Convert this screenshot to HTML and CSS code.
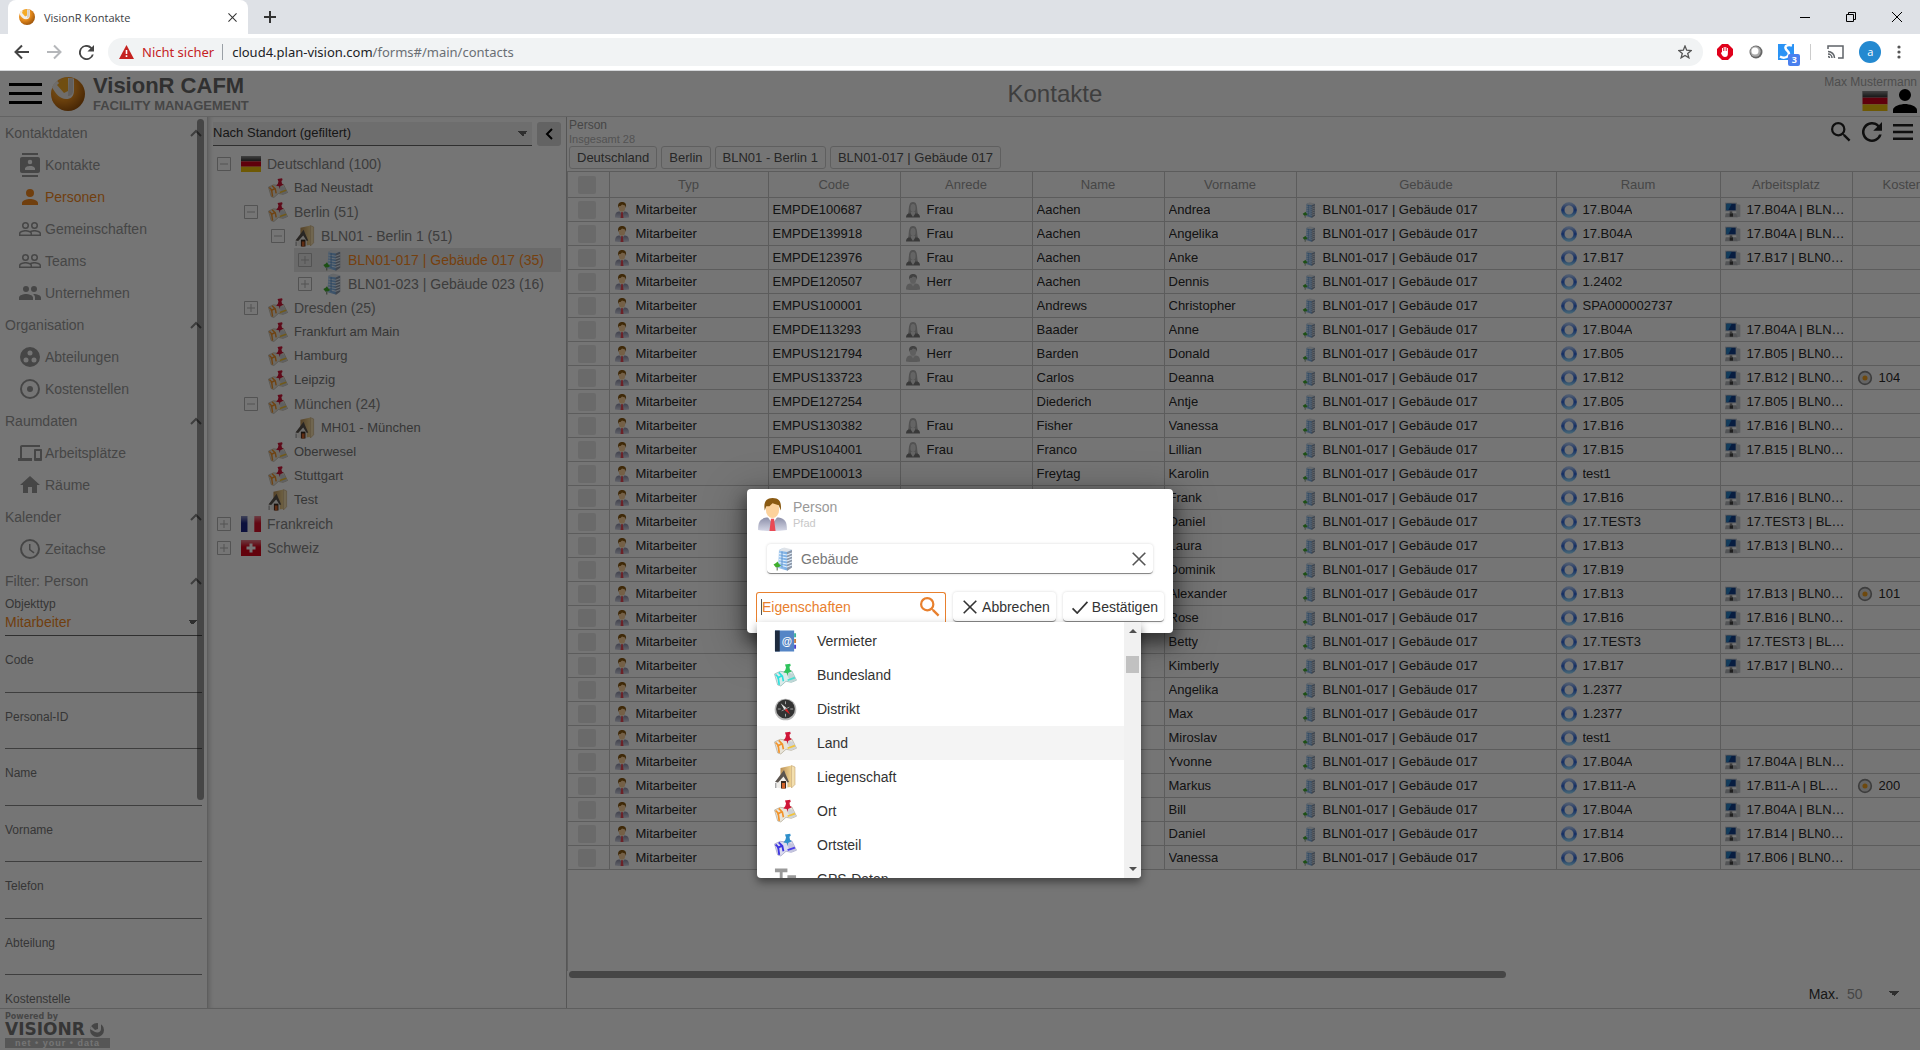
FILE: index.html
```html
<!DOCTYPE html>
<html lang="de">
<head>
<meta charset="utf-8">
<title>VisionR Kontakte</title>
<link rel="stylesheet" href="styles.css">
</head>
<body>
<svg class="sprite" aria-hidden="true">
  <defs>
    <radialGradient id="g-orb" cx=".35" cy=".3" r=".8"><stop offset="0" stop-color="#ffc34d"/><stop offset=".5" stop-color="#e58a1c"/><stop offset="1" stop-color="#8f4a08"/></radialGradient>
    <linearGradient id="g-bld" x1="0" x2="1"><stop offset="0" stop-color="#a9cdf0"/><stop offset="1" stop-color="#5f9cdc"/></linearGradient>
    <linearGradient id="g-folder" x1="0" x2="1"><stop offset="0" stop-color="#b98f55"/><stop offset="1" stop-color="#f1d594"/></linearGradient>
    <linearGradient id="g-suit" x1="0" y1="0" x2="0" y2="1"><stop offset="0" stop-color="#8d90aa"/><stop offset="1" stop-color="#d5d7e6"/></linearGradient>
    <linearGradient id="g-gloss" x1="0" y1="0" x2="0" y2="1"><stop offset="0" stop-color="#fff" stop-opacity=".5"/><stop offset="1" stop-color="#fff" stop-opacity="0"/></linearGradient>
    <linearGradient id="g-room" x1="0" y1="0" x2="0" y2="1"><stop offset="0" stop-color="#a5c4f5"/><stop offset=".5" stop-color="#2b62d8"/><stop offset="1" stop-color="#8fd4ff"/></linearGradient>
  </defs>
  <symbol id="i-logo" viewBox="0 0 34 34"><circle cx="17" cy="17" r="17" fill="url(#g-orb)"/><path d="M1 10.500C2 8 4 5 6 3.800L15 14 17 1l6 .5v12c0 6-3 8.500-8 8.500-6 0-10-5-14-11.500z" fill="#f2eee9"/><path d="M6 8L13 1.500 17 0v14l-4 2z" fill="#f5ab27"/><path d="M18 1l4 1v12c0 3-2 5-5 5z" fill="#d5cfca"/></symbol>
  <symbol id="i-contacts" viewBox="0 0 24 24"><path d="M20 0H4v2h16V0zM4 24h16v-2H4v2zM20 4H4c-1.100 0-2 .9-2 2v12c0 1.100.9 2 2 2h16c1.100 0 2-.9 2-2V6c0-1.100-.9-2-2-2zm-8 2.750a2.250 2.250 0 1 1 0 4.500 2.250 2.250 0 0 1 0-4.500zM17 17H7v-1.500c0-1.670 3.330-2.500 5-2.500s5 .83 5 2.500V17z"/></symbol>
  <symbol id="i-person" viewBox="0 0 24 24"><path d="M12 12a4 4 0 1 0 0-8 4 4 0 0 0 0 8zm0 2c-2.670 0-8 1.340-8 4v2h16v-2c0-2.660-5.330-4-8-4z"/></symbol>
  <symbol id="i-user" viewBox="4 4 16 16"><path d="M12 12a4 4 0 1 0 0-8 4 4 0 0 0 0 8zm0 2c-2.670 0-8 1.340-8 4v2h16v-2c0-2.660-5.330-4-8-4z"/></symbol>
  <symbol id="i-group" viewBox="0 0 24 24"><path d="M16.500 13c-1.200 0-3.070.34-4.500 1-1.430-.67-3.300-1-4.500-1C5.330 13 1 14.080 1 16.250V19h22v-2.750C23 14.080 18.670 13 16.500 13zm-4 4.500h-10v-1.250c0-.54 2.560-1.750 5-1.750s5 1.210 5 1.750v1.250zm9 0H14v-1.250c0-.46-.2-.86-.52-1.220.88-.3 1.960-.53 3.020-.53 2.440 0 5 1.210 5 1.750v1.250zM7.500 12a3.500 3.500 0 1 0 0-7 3.500 3.500 0 0 0 0 7zm0-5.500a2 2 0 1 1 0 4 2 2 0 0 1 0-4zm9 5.500a3.500 3.500 0 1 0 0-7 3.500 3.500 0 0 0 0 7zm0-5.500a2 2 0 1 1 0 4 2 2 0 0 1 0-4z"/></symbol>
  <symbol id="i-people" viewBox="0 0 24 24"><path d="M16 11a3 3 0 1 0 0-6 3 3 0 0 0 0 6zm-8 0a3 3 0 1 0 0-6 3 3 0 0 0 0 6zm0 2c-2.330 0-7 1.170-7 3.500V19h14v-2.500C15 14.170 10.330 13 8 13zm8 0c-.29 0-.62.020-.97.050 1.160.84 1.970 1.970 1.970 3.450V19h6v-2.500c0-2.330-4.670-3.500-7-3.500z"/></symbol>
  <symbol id="i-work" viewBox="0 0 24 24"><path fill-rule="evenodd" d="M12 2a10 10 0 1 0 0 20 10 10 0 0 0 0-20zM8 17.500a2.500 2.500 0 1 1 0-5 2.500 2.500 0 0 1 0 5zM9.500 8a2.500 2.500 0 1 1 5 0 2.500 2.500 0 0 1-5 0zm6.500 9.500a2.500 2.500 0 1 1 0-5 2.500 2.500 0 0 1 0 5z"/></symbol>
  <symbol id="i-target" viewBox="0 0 24 24"><circle cx="12" cy="12" r="9" fill="none" stroke="currentColor" stroke-width="2"/><circle cx="12" cy="12" r="3"/></symbol>
  <symbol id="i-devices" viewBox="0 0 24 24"><path d="M4 6h18V4H4c-1.100 0-2 .9-2 2v11H0v3h14v-3H4V6zm19 2h-6c-.55 0-1 .45-1 1v10c0 .55.45 1 1 1h6c.55 0 1-.45 1-1V9c0-.55-.45-1-1-1zm-1 9h-4v-7h4v7z"/></symbol>
  <symbol id="i-home" viewBox="0 0 24 24"><path d="M10 20v-6h4v6h5v-8h3L12 3 2 12h3v8z"/></symbol>
  <symbol id="i-clock" viewBox="0 0 24 24"><circle cx="12" cy="12" r="9" fill="none" stroke="currentColor" stroke-width="2"/><path d="M11 7h1.500v5.200l4 3-.9 1.200L11 13z"/></symbol>
  <symbol id="i-search" viewBox="3 3 18 18"><path d="M15.500 14h-.79l-.28-.27A6.470 6.470 0 0 0 16 9.500 6.500 6.500 0 1 0 9.500 16c1.610 0 3.090-.59 4.230-1.570l.27.28v.79l5 4.990L20.490 19l-4.990-5zm-6 0a4.500 4.500 0 1 1 0-9 4.500 4.500 0 0 1 0 9z"/></symbol>
  <symbol id="i-refresh" viewBox="4 4 16 16"><path d="M17.650 6.350A8 8 0 1 0 19.730 14h-2.080A6 6 0 1 1 12 6c1.660 0 3.140.69 4.220 1.780L13 11h7V4l-2.350 2.350z"/></symbol>
  <symbol id="i-menu" viewBox="0 0 20 16"><path d="M0 0h20v2.500H0zM0 6.750h20v2.500H0zM0 13.500h20V16H0z"/></symbol>
  <symbol id="i-up" viewBox="0 0 12 8"><path d="M1 7l5-5 5 5" fill="none" stroke="currentColor" stroke-width="2"/></symbol>
  <symbol id="i-left" viewBox="0 0 8 12"><path d="M7 1L2 6l5 5" fill="none" stroke="currentColor" stroke-width="2"/></symbol>
  <symbol id="i-x" viewBox="0 0 14 14"><path d="M.7.7l12.600 12.600M13.300.7L.7 13.300" fill="none" stroke="currentColor" stroke-width="1.600"/></symbol>
  <symbol id="i-check" viewBox="0 0 18 14"><path d="M1 8l5 5L17 1" fill="none" stroke="currentColor" stroke-width="1.800"/></symbol>
  <symbol id="i-map" viewBox="0 0 22 22"><path d="M.5 10L6 7.500 11 8l6-1 2 4 2.500 5-5 2-5-1-5 4.500-3-1z" fill="#e9e5da" stroke="#b3ab98" stroke-width=".7"/><path d="M11 8l2 4 3 6 5-2-3-6z" fill="#cfd3d6"/><path d="M1.500 10.500L4 13l1 7.500M4.500 8.500L8 12l1 5M3 14l4-2" stroke="#f2932b" stroke-width="1.600" fill="none"/><path d="M13 16l7-2.500" stroke="#f3c33a" stroke-width="1.600"/><path d="M10.500 1l5-.8.5 2-1.200 1 .5 2.800 1.700 1.500-3.500 1.500L13 12l-.8-2.800L9 8.500l1.800-2.200.7-2.500z" fill="#cf1638"/></symbol>
  <symbol id="i-mapgreen" viewBox="0 0 22 22"><path d="M.5 10L6 7.500 11 8l6-1 2 4 2.500 5-5 2-5-1-5 4.500-3-1z" fill="#dcebea" stroke="#8fb8b4" stroke-width=".7"/><path d="M11 8l2 4 3 6 5-2-3-6z" fill="#bfd6d6"/><path d="M1.500 10.500L4 13l1 7.500M4.500 8.500L8 12l1 5M3 14l4-2" stroke="#2fe0dd" stroke-width="1.600" fill="none"/><path d="M13 16l7-2.500" stroke="#4adfd0" stroke-width="1.600"/><path d="M10.500 1l5-.8.5 2-1.200 1 .5 2.800 1.700 1.500-3.500 1.500L13 12l-.8-2.800L9 8.500l1.800-2.200.7-2.500z" fill="#2fc35c"/></symbol>
  <symbol id="i-mapblue" viewBox="0 0 22 22"><path d="M.5 10L6 7.500 11 8l6-1 2 4 2.500 5-5 2-5-1-5 4.500-3-1z" fill="#dcdcee" stroke="#a09fc4" stroke-width=".7"/><path d="M11 8l2 4 3 6 5-2-3-6z" fill="#c3c4de"/><path d="M1.500 10.500L4 13l1 7.500M4.500 8.500L8 12l1 5M3 14l4-2" stroke="#3d35e0" stroke-width="1.800" fill="none"/><path d="M13 16l7-2.500" stroke="#4a3de8" stroke-width="1.800"/><path d="M10.500 1l5-.8.5 2-1.200 1 .5 2.800 1.700 1.500-3.500 1.500L13 12l-.8-2.800L9 8.500l1.800-2.200.7-2.500z" fill="#2f8fca"/></symbol>
  <symbol id="i-estate" viewBox="0 0 22 24"><path d="M6 3l11-2.500V22L6 23z" fill="url(#g-folder)"/><path d="M17 .5l3.500 1.500v17.500L17 23z" fill="#f3dfae" stroke="#b8935a" stroke-width=".5"/><path d="M2.500 16L9 10l4 5v8l-5 .8-5.500-1.300z" fill="#f0eeea"/><path d="M.5 17L9.500 5l1.500 4 3.500 8-1.500.5-4-6-5.500 6z" fill="#5b544e"/><path d="M6.500 16h5v7.500h-5z" fill="#3a2a20"/><path d="M7.500 18h3v5.500h-3z" fill="#d2622a"/><path d="M.5 18H2v5H.5z" fill="#aaa"/></symbol>
  <symbol id="i-building" viewBox="0 0 20 24"><path d="M6 3l3-1.500L18.500 3v17L14 23.500 5 21z" fill="url(#g-bld)"/><path d="M14 5l5-2v17.500L14 24z" fill="#8c97a8"/><path d="M5.500 3.500L11 .5l8.500 2L14 5z" fill="#dfe3e8"/><path d="M6 6.500l8 1.500 5-2M6 9.500l8 1.500 5-2M6 12.500l8 1.500 5-2M6 15.500l8 1.500 5-2M9 18.500l5 1.500 5-2" fill="none" stroke="#e3f0fc" stroke-width="1.100"/><path d="M9 4.500v16" stroke="#4a86c8" stroke-width=".8"/><path d="M.5 17.500L3 16l1.500-1.500L6 17l2 1.500-2 1.500-3 .5z" fill="#3fae2c"/><path d="M3.500 20h1.500v3.500H3.500z" fill="#8f9c8a"/></symbol>
  <symbol id="i-emp" viewBox="0 0 28 32"><path d="M0 31c0-8 2-11 8-12h12c6 1 8 4 8 12q-14 2-28 0z" fill="url(#g-suit)"/><path d="M9 18h10l-5 7z" fill="#fff"/><path d="M12.500 20h3l1.500 12h-6z" fill="#ea4a55"/><ellipse cx="14" cy="11" rx="6.500" ry="8.500" fill="#fcd29c"/><path d="M6.500 12C5 4 8 0 14 0c7 0 9 4 8 12l-2-5-6-2-3 3-3 0z" fill="#8a5a12"/></symbol>
  <symbol id="i-herr" viewBox="0 0 28 32"><path d="M0 31c0-8 2-11 8-12h12c6 1 8 4 8 12q-14 2-28 0z" fill="#c4c4c4"/><path d="M9 18h10l-5 7z" fill="#e4e4e4"/><ellipse cx="14" cy="11" rx="6.500" ry="8.500" fill="#d0d0d0"/><path d="M6.500 12C5 4 8 0 14 0c7 0 9 4 8 12l-2-5-6-2-3 3-3 0z" fill="#8f8f8f"/></symbol>
  <symbol id="i-frau" viewBox="0 0 28 32"><path d="M5 20C6 6 7 0 14 0s8 6 9 20l2 6H3z" fill="#b4b4b4"/><path d="M0 31q0-7 6-8h5l3 4 3-4h5q6 1 6 8z" fill="#7c7c7c"/><path d="M10 20h8v4l-4 6-4-6z" fill="#dcdcdc"/><ellipse cx="14" cy="12" rx="5" ry="8" fill="#dadada"/></symbol>
  <symbol id="i-room" viewBox="0 0 24 24"><circle cx="12" cy="12" r="9.300" fill="none" stroke="url(#g-room)" stroke-width="5"/><path d="M6 11l6-6 6 6h-2v6H8v-6z" fill="#fff"/></symbol>
  <symbol id="i-pc" viewBox="0 0 24 24"><path d="M17 3l6 1v18l-6 1z" fill="#c9ccd0"/><path d="M0 1h18v13H0z" fill="#c5cad2"/><path d="M2 2.500h14v10H2z" fill="#123f8c"/><path d="M2 2.500h8l-5 10H2z" fill="#2a86c9"/><path d="M7 14h4v3H7z" fill="#888"/><path d="M1 17h16l2 6H0z" fill="#b5b8bc"/><path d="M7 17h5v5H7z" fill="#444"/></symbol>
  <symbol id="i-cost" viewBox="0 0 24 24"><circle cx="12" cy="12" r="9.500" fill="#d9d9d9" stroke="#858585" stroke-width="2.500"/><circle cx="12" cy="12" r="3.800" fill="#f0a020"/></symbol>
  <symbol id="i-de" viewBox="0 0 20 16"><path d="M0 0h20v5.300H0z" fill="#222"/><path d="M0 5.300h20v5.400H0z" fill="#d0021b"/><path d="M0 10.700h20V16H0z" fill="#f0c20c"/><path d="M0 0h20v6H0z" fill="url(#g-gloss)"/></symbol>
  <symbol id="i-fr" viewBox="0 0 20 16"><path d="M0 0h6.700v16H0z" fill="#1c2786"/><path d="M6.700 0h6.600v16H6.700z" fill="#f4f4f4"/><path d="M13.300 0H20v16h-6.700z" fill="#d8102a"/><path d="M0 0h20v7H0z" fill="url(#g-gloss)"/></symbol>
  <symbol id="i-ch" viewBox="0 0 20 16"><path d="M0 0h20v16H0z" fill="#d8051c"/><path d="M0 0h20v7H0z" fill="url(#g-gloss)"/><path d="M8.500 3.500h3v3h3v3h-3v3h-3v-3h-3v-3h3z" fill="#fff"/></symbol>
  <symbol id="i-plus" viewBox="0 0 14 14"><path d="M.5.5h13v13H.5zM3 7h8M7 3v8" fill="none" stroke="currentColor"/></symbol>
  <symbol id="i-minus" viewBox="0 0 14 14"><path d="M.5.5h13v13H.5zM3 7h8" fill="none" stroke="currentColor"/></symbol>
  <symbol id="i-compass" viewBox="0 0 24 24"><circle cx="12" cy="12.500" r="11.300" fill="#b9b9b9"/><circle cx="12" cy="12" r="9.800" fill="#333"/><path d="M12 4v3M12 17v3M4 12h3M17 12h3" stroke="#aaa"/><path d="M7 6l6 5-2 2z" fill="#e5e5e5"/><path d="M17 18l-6-5 2-2z" fill="#d8252a"/><path d="M8 14l8-4" stroke="#999"/></symbol>
  <symbol id="i-type" viewBox="0 0 24 24"><path d="M1 1h13v4H9v14H6V5H1zM14 8h9v3h-3v9h-3v-9h-3z" fill="#999"/></symbol>
</svg>

<header class="browser">
  <div class="tabs">
    <div class="tab">
      <svg class="favicon"><use href="#i-logo"/></svg>
      <span class="tab-title">VisionR Kontakte</span>
      <button class="plain" aria-label="Tab schließen"><svg class="tab-x"><use href="#i-x"/></svg></button>
    </div>
    <button class="plain new-tab" aria-label="Neuer Tab"><svg width="12" height="12" viewBox="0 0 12 12"><path d="M6 0v12M0 6h12" stroke="#333" stroke-width="2"/></svg></button>
    <div class="window-buttons">
      <button class="plain" aria-label="Minimieren"><svg width="10" height="10" viewBox="0 0 10 10"><path d="M0 5.500h10" stroke="#000"/></svg></button>
      <button class="plain" aria-label="Wiederherstellen"><svg width="10" height="10" viewBox="0 0 10 10"><path d="M.5 2.500h7v7h-7zM2.500 2.500v-2h7v7h-2" fill="none" stroke="#000"/></svg></button>
      <button class="plain" aria-label="Schließen"><svg width="10" height="10" viewBox="0 0 10 10"><path d="M0 0l10 10M10 0L0 10" stroke="#000"/></svg></button>
    </div>
  </div>
  <div class="toolbar">
    <button class="plain nav-btn" aria-label="Zurück"><svg width="16" height="16" viewBox="0 0 16 16"><path d="M15 8H2M8 1.500L1.500 8 8 14.500" fill="none" stroke="#444" stroke-width="2"/></svg></button>
    <button class="plain nav-btn" aria-label="Vorwärts"><svg width="16" height="16" viewBox="0 0 16 16"><path d="M1 8h13M8 1.500L14.500 8 8 14.500" fill="none" stroke="#b5b7ba" stroke-width="2"/></svg></button>
    <button class="plain nav-btn" aria-label="Neu laden"><svg class="reload"><use href="#i-refresh"/></svg></button>
    <div class="address">
      <svg width="15" height="14" viewBox="0 0 15 14"><path d="M7.500 0L15 14H0z" fill="#c5221f"/><path d="M6.700 5h1.600v4H6.700zM6.700 10.300h1.600V12H6.700z" fill="#fff"/></svg>
      <span class="insecure">Nicht sicher</span>
      <span class="address-sep"></span>
      <span class="url">cloud4.plan-vision.com<span class="path">/forms#/main/contacts</span></span>
      <svg width="14" height="14" viewBox="0 0 14 14"><path d="M7 1l1.700 4.200 4.500.3-3.500 2.900 1.200 4.400L7 10.400l-3.900 2.400 1.200-4.400L.8 5.500l4.500-.3z" fill="none" stroke="#555" stroke-width="1.300"/></svg>
    </div>
    <div class="extensions">
      <svg width="16" height="16" viewBox="0 0 16 16"><path d="M5 0h6l5 5v6l-5 5H5l-5-5V5z" fill="#e0001b"/><path d="M5 8V4h1v3h.7V3h1v4h.6V3h1v4h.6V4h1v5c0 3-1 4-3 4-1.500 0-2.500-1-4-4z" fill="#fff"/></svg>
      <svg width="14" height="14" viewBox="0 0 14 14"><circle cx="7" cy="7" r="6.500" fill="#666"/><circle cx="6.500" cy="6.500" r="5.200" fill="#aaa"/><circle cx="6" cy="6" r="3.500" fill="#fff"/></svg>
      <span class="ext-badge"><svg width="16" height="16" viewBox="0 0 16 16"><path d="M0 0h16v16H0z" fill="#2a93f5"/><path d="M14 1.500c-3-1-7-.5-6.500 2.500s5 3.500 3 7-6 3-8.500 1.500" fill="none" stroke="#fff" stroke-width="2.500"/></svg><span class="badge">3</span></span>
      <span class="ext-sep"></span>
      <svg width="17" height="14" viewBox="0 0 17 14"><path d="M1 4V1h15v12h-5M1 11.500a1.500 1.500 0 0 1 1.500 1.500M1 9a4 4 0 0 1 4 4M1 6.500a6.500 6.500 0 0 1 6.500 6.500" fill="none" stroke="#5f6368" stroke-width="1.500"/></svg>
      <span class="avatar">a</span>
      <svg width="4" height="14" viewBox="0 0 4 14"><g fill="#555"><circle cx="2" cy="2" r="1.600"/><circle cx="2" cy="7" r="1.600"/><circle cx="2" cy="12" r="1.600"/></g></svg>
    </div>
  </div>
</header>

<div class="app">
  <header class="app-bar">
    <button class="plain burger" aria-label="Menü"><span></span><span></span><span></span></button>
    <svg class="brand-logo"><use href="#i-logo"/></svg>
    <div class="brand"><span class="brand-name">VisionR CAFM</span><span class="brand-sub">FACILITY MANAGEMENT</span></div>
    <h1>Kontakte</h1>
    <div class="user"><span>Max Mustermann</span><div class="user-icons"><svg class="user-flag"><use href="#i-de"/></svg><svg class="user-icon"><use href="#i-user"/></svg></div></div>
  </header>

  <div class="columns">
    <nav class="sidebar">
      <h2>Kontaktdaten<svg><use href="#i-up"/></svg></h2>
      <a href="#k"><svg><use href="#i-contacts"/></svg>Kontakte</a>
      <a href="#p" class="active"><svg><use href="#i-person"/></svg>Personen</a>
      <a href="#g"><svg><use href="#i-group"/></svg>Gemeinschaften</a>
      <a href="#t"><svg><use href="#i-group"/></svg>Teams</a>
      <a href="#u"><svg><use href="#i-people"/></svg>Unternehmen</a>
      <h2>Organisation<svg><use href="#i-up"/></svg></h2>
      <a href="#a"><svg><use href="#i-work"/></svg>Abteilungen</a>
      <a href="#ks"><svg><use href="#i-target"/></svg>Kostenstellen</a>
      <h2>Raumdaten<svg><use href="#i-up"/></svg></h2>
      <a href="#ap"><svg><use href="#i-devices"/></svg>Arbeitsplätze</a>
      <a href="#r"><svg><use href="#i-home"/></svg>Räume</a>
      <h2>Kalender<svg><use href="#i-up"/></svg></h2>
      <a href="#z"><svg><use href="#i-clock"/></svg>Zeitachse</a>
      <h2>Filter: Person<svg><use href="#i-up"/></svg></h2>
      <div class="fields">
        <div class="field first"><label for="f-typ">Objekttyp</label><select id="f-typ"><option>Mitarbeiter</option></select></div>
        <div class="field"><label for="f-code">Code</label><input id="f-code"></div>
        <div class="field"><label for="f-pid">Personal-ID</label><input id="f-pid"></div>
        <div class="field"><label for="f-name">Name</label><input id="f-name"></div>
        <div class="field"><label for="f-vor">Vorname</label><input id="f-vor"></div>
        <div class="field"><label for="f-tel">Telefon</label><input id="f-tel"></div>
        <div class="field"><label for="f-abt">Abteilung</label><input id="f-abt"></div>
        <div class="field"><label for="f-kst">Kostenstelle</label><input id="f-kst"></div>
      </div>
      <span class="v-thumb"></span>
    </nav>

    <section class="tree-panel">
      <div class="tree-head">
        <select aria-label="Ansicht"><option>Nach Standort (gefiltert)</option></select>
        <button aria-label="Einklappen"><svg><use href="#i-left"/></svg></button>
      </div>
      <ul class="tree">
        <li class="l0"><svg class="exp"><use href="#i-minus"/></svg><svg class="flag"><use href="#i-de"/></svg>Deutschland (100)</li>
        <li class="l1 leaf"><svg class="ico"><use href="#i-map"/></svg>Bad Neustadt</li>
        <li class="l1"><svg class="exp"><use href="#i-minus"/></svg><svg class="ico"><use href="#i-map"/></svg>Berlin (51)</li>
        <li class="l2"><svg class="exp"><use href="#i-minus"/></svg><svg class="ico"><use href="#i-estate"/></svg>BLN01 - Berlin 1 (51)</li>
        <li class="l3 selected"><svg class="exp"><use href="#i-plus"/></svg><svg class="ico"><use href="#i-building"/></svg>BLN01-017 | Gebäude 017 (35)</li>
        <li class="l3"><svg class="exp"><use href="#i-plus"/></svg><svg class="ico"><use href="#i-building"/></svg>BLN01-023 | Gebäude 023 (16)</li>
        <li class="l1"><svg class="exp"><use href="#i-plus"/></svg><svg class="ico"><use href="#i-map"/></svg>Dresden (25)</li>
        <li class="l1 leaf"><svg class="ico"><use href="#i-map"/></svg>Frankfurt am Main</li>
        <li class="l1 leaf"><svg class="ico"><use href="#i-map"/></svg>Hamburg</li>
        <li class="l1 leaf"><svg class="ico"><use href="#i-map"/></svg>Leipzig</li>
        <li class="l1"><svg class="exp"><use href="#i-minus"/></svg><svg class="ico"><use href="#i-map"/></svg>München (24)</li>
        <li class="l2 leaf"><svg class="ico"><use href="#i-estate"/></svg>MH01 - München</li>
        <li class="l1 leaf"><svg class="ico"><use href="#i-map"/></svg>Oberwesel</li>
        <li class="l1 leaf"><svg class="ico"><use href="#i-map"/></svg>Stuttgart</li>
        <li class="l1 leaf"><svg class="ico"><use href="#i-estate"/></svg>Test</li>
        <li class="l0"><svg class="exp"><use href="#i-plus"/></svg><svg class="flag"><use href="#i-fr"/></svg>Frankreich</li>
        <li class="l0"><svg class="exp"><use href="#i-plus"/></svg><svg class="flag"><use href="#i-ch"/></svg>Schweiz</li>
      </ul>
    </section>

    <main class="list">
      <div class="list-head">
        <div class="list-title"><span class="kind">Person</span><span class="total">Insgesamt 28</span></div>
        <div class="list-actions">
          <button class="plain" aria-label="Suchen"><svg><use href="#i-search"/></svg></button>
          <button class="plain" aria-label="Aktualisieren"><svg><use href="#i-refresh"/></svg></button>
          <button class="plain" aria-label="Menü"><svg><use href="#i-menu"/></svg></button>
        </div>
      </div>
      <div class="crumbs"><button>Deutschland</button><button>Berlin</button><button>BLN01 - Berlin 1</button><button>BLN01-017 | Gebäude 017</button></div>
      <div class="table-wrap">
        <table>
          <colgroup><col class="c-check"><col class="c-typ"><col class="c-std"><col class="c-std"><col class="c-std"><col class="c-std"><col class="c-geb"><col class="c-raum"><col class="c-std"><col class="c-std"></colgroup>
          <thead><tr><th><input type="checkbox" aria-label="Alle auswählen"></th><th>Typ</th><th>Code</th><th>Anrede</th><th>Name</th><th>Vorname</th><th>Gebäude</th><th>Raum</th><th>Arbeitsplatz</th><th>Kostenstelle</th></tr></thead>
          <tbody id="rows"></tbody>
        </table>
      </div>
      <div class="h-track"><span class="h-thumb"></span></div>
      <div class="pager"><label for="max">Max.</label><select id="max"><option>50</option></select></div>
    </main>
  </div>

  <footer>
    <span class="powered">Powered by</span>
    <span class="foot-brand">VISIONR<svg viewBox="0 0 14 14"><circle cx="7" cy="7" r="7" fill="#999"/><path d="M1 3l4 4 3-1V0h3v6c0 3-3 4-6 3L0 6z" fill="#fff"/></svg></span>
    <span class="foot-tag">net • your • data</span>
  </footer>

  <div class="backdrop">
    <div class="dialog" role="dialog" aria-label="Person">
      <div class="dialog-head"><svg class="dialog-icon"><use href="#i-emp"/></svg><div><span class="dialog-title">Person</span><span class="dialog-sub">Pfad</span></div></div>
      <div class="path-row"><svg class="path-icon"><use href="#i-building"/></svg><input aria-label="Pfad" value="Gebäude"><button class="plain" aria-label="Entfernen"><svg class="clear"><use href="#i-x"/></svg></button></div>
      <div class="dialog-actions">
        <div class="search"><span class="caret"></span><input aria-label="Eigenschaften" placeholder="Eigenschaften"><svg><use href="#i-search"/></svg>
          <div class="menu">
            <ul>
              <li><svg viewBox="0 0 24 24"><path d="M1 1h20v22H1z" fill="#5585c6"/><path d="M1 1h5v22H1z" fill="#1e2b3f"/><path d="M21 4h2v4h-2z" fill="#3bb39b"/><path d="M21 10h2v4h-2z" fill="#c97a43"/><path d="M21 16h2v4h-2z" fill="#4a43c9"/><text x="13.500" y="16" text-anchor="middle" class="at">@</text></svg>Vermieter</li>
              <li><svg><use href="#i-mapgreen"/></svg>Bundesland</li>
              <li><svg><use href="#i-compass"/></svg>Distrikt</li>
              <li class="hover"><svg><use href="#i-map"/></svg>Land</li>
              <li><svg><use href="#i-estate"/></svg>Liegenschaft</li>
              <li><svg><use href="#i-map"/></svg>Ort</li>
              <li><svg><use href="#i-mapblue"/></svg>Ortsteil</li>
              <li><svg><use href="#i-type"/></svg>GPS-Daten</li>
            </ul>
            <div class="menu-scroll"><span class="arrow up"></span><span class="thumb"></span><span class="arrow down"></span></div>
          </div>
        </div>
        <button class="action"><svg class="a-x"><use href="#i-x"/></svg>Abbrechen</button>
        <button class="action"><svg class="a-check"><use href="#i-check"/></svg>Bestätigen</button>
      </div>
    </div>
  </div>
</div>
<script src="rows.js"></script>
</body>
</html>
```
FILE: styles.css
```css
* { box-sizing: border-box; }
body {
  margin: 0;
  height: 100vh;
  display: flex;
  flex-direction: column;
  overflow: hidden;
  font-family: "Liberation Sans", Arial, sans-serif;
  font-size: 14px;
  color: #222;
  background: #fff;
}
button, input, select { font: inherit; color: inherit; margin: 0; }
svg { display: block; flex: none; fill: currentColor; }
.sprite { position: absolute; width: 0; height: 0; }
.plain { border: 0; background: none; padding: 0; display: flex; align-items: center; justify-content: center; }

/* browser frame */
.browser { flex: none; font-family: "Open Sans", "Noto Sans", sans-serif; border-bottom: 1px solid #d5d7da; }
.tabs { height: 34px; background: #dee1e6; display: flex; align-items: center; padding-left: 8px; }
.tab { width: 240px; height: 34px; background: #fff; border-radius: 8px 8px 0 0; display: flex; align-items: center; padding: 0 11px; }
.favicon { width: 16px; height: 16px; margin-right: 9px; }
.tab-title { flex: 1; font-size: 11px; color: #3c4043; }
.tab-x { width: 9px; height: 9px; color: #333; }
.new-tab { width: 44px; height: 34px; }
.window-buttons { margin-left: auto; display: flex; }
.window-buttons button { width: 46px; height: 28px; }
.toolbar { height: 36px; display: flex; align-items: center; padding-left: 6px; }
.nav-btn { width: 32px; height: 32px; }
.reload { width: 15px; height: 15px; color: #444; }
.address { flex: 1; height: 28px; margin-left: 6px; border-radius: 14px; background: #f1f3f4; display: flex; align-items: center; padding: 0 11px; font-size: 13px; font-family: "Noto Sans", "Open Sans", sans-serif; }
.insecure { color: #c5221f; margin-left: 8px; }
.address-sep { width: 1px; height: 16px; background: #9aa0a6; margin: 0 9px 0 8px; }
.url { flex: 1; color: #202124; }
.path { color: #6a6f74; }
.extensions { width: 217px; display: flex; align-items: center; justify-content: space-between; padding: 0 19px 0 14px; }
.ext-badge { position: relative; }
.badge { position: absolute; left: 10px; top: 10px; width: 12px; height: 12px; border-radius: 2px; background: #4a80ee; color: #fff; font-size: 9px; font-weight: bold; line-height: 12px; text-align: center; }
.ext-sep { width: 1px; height: 16px; background: #ccc; }
.avatar { width: 22px; height: 22px; border-radius: 50%; background: #2489d0; color: #fff; font-size: 11px; line-height: 21px; text-align: center; }

/* application shell */
.app { flex: 1; min-height: 0; position: relative; display: flex; flex-direction: column; }
.app-bar { height: 46px; flex: none; display: flex; align-items: center; border-bottom: 1px solid #d8d8d8; padding: 0 3px 0 9px; }
.burger { flex-direction: column; gap: 6px; width: 33px; }
.burger span { width: 33px; height: 3px; background: #000; }
.brand-logo { width: 34px; height: 34px; margin: 0 8px 0 9px; }
.brand { display: flex; flex-direction: column; font-weight: bold; }
.brand-name { font-size: 22px; line-height: 24px; color: #6a6a6a; }
.brand-sub { font-size: 13px; line-height: 16px; color: #999; }
h1 { flex: 1; margin: 0; padding-left: 38px; text-align: center; font-size: 24px; font-weight: normal; color: #888; }
.user { width: 94px; font-size: 12px; line-height: 14px; color: #aaa; display: flex; flex-direction: column; align-items: flex-end; white-space: nowrap; }
.user-icons { display: flex; align-items: center; gap: 5px; }
.user-flag { width: 26px; height: 20px; }
.user-icon { width: 24px; height: 24px; color: #000; }
.columns { flex: 1; min-height: 0; display: flex; }

/* navigation */
.sidebar { position: relative; width: 207px; flex: none; overflow: hidden; color: #999; }
.sidebar h2 { margin: 0; height: 32px; padding: 0 5px; display: flex; align-items: center; justify-content: space-between; font-size: 14px; font-weight: normal; }
.sidebar h2 svg { width: 12px; height: 8px; color: #888; }
.sidebar a { height: 32px; padding-left: 18px; display: flex; align-items: center; gap: 3px; color: #999; text-decoration: none; }
.sidebar a svg { width: 24px; height: 24px; }
.sidebar a.active { color: #f58a1f; }
.fields { padding: 0 5px; color: #777; font-size: 12px; }
.field { height: 57px; border-bottom: 1px solid #888; display: flex; flex-direction: column; padding-top: 17px; }
.field:nth-child(odd) { height: 56px; }
.field.first { height: 39px; padding-top: 0; border-color: #666; }
.field label { line-height: 14px; }
.field input, .field select { border: 0; background: none; padding: 0; height: 22px; width: 100%; outline: 0; }
.field select { color: #f58a1f; font-size: 14px; }
select { appearance: none; border-radius: 0; }
.field select, .tree-head select, .pager select {
  background-image: linear-gradient(to top right, transparent 50%, #666 50%), linear-gradient(to top left, transparent 50%, #666 50%);
  background-size: 5px 5px, 5px 5px;
  background-position: right 9px center, right 4px center;
  background-repeat: no-repeat;
}
.v-thumb { position: absolute; left: 197px; top: 2px; width: 7px; height: 681px; border-radius: 4px; background: rgba(0, 0, 0, .4); }

/* location tree */
.tree-panel { width: 360px; flex: none; border-left: 1px solid #ccc; border-right: 1px solid #bbb; box-shadow: inset 4px 0 4px -2px #d5d5d5; padding: 5px 5px 0; color: #858585; }
.tree-head { display: flex; justify-content: space-between; align-items: center; margin-bottom: 6px; }
.tree-head select { width: 319px; height: 24px; border: 0; border-bottom: 1px solid #666; padding: 0 0 2px; font-size: 13px; color: #333; outline: 0; }
.tree-head button { width: 24px; height: 24px; padding: 0; border: 0; border-radius: 3px; background: #d8d8d8; display: flex; align-items: center; justify-content: center; color: #000; }
.tree-head button svg { width: 8px; height: 12px; }
.tree { list-style: none; margin: 0; padding: 0; }
.tree li { height: 24px; display: flex; align-items: center; padding-left: 4px; white-space: nowrap; }
.tree .leaf { font-size: 13px; color: #777; padding: 0 0 1px 25px; }
.tree .l1 { margin-left: 27px; }
.tree .l2 { margin-left: 54px; }
.tree .l3 { margin-left: 81px; }
.tree .selected { background: #e8e8e8; color: #ff8c1f; }
.exp { width: 14px; height: 14px; margin-right: 7px; color: #b5b5b5; }
.tree li .exp + svg { margin-left: 3px; }
.leaf .ico { margin-left: 3px; }
.flag { width: 20px; height: 16px; margin-right: 6px; }
.ico { width: 20px; height: 22px; margin-right: 6px; }

/* list of people */
.list { flex: 1; min-width: 0; display: flex; flex-direction: column; }
.list-head { display: flex; justify-content: space-between; padding-left: 2px; height: 29px; }
.list-title { display: flex; flex-direction: column; padding-top: 1px; }
.kind { font-size: 12px; line-height: 14px; color: #999; }
.total { font-size: 11px; line-height: 14px; color: #b5b5b5; }
.list-actions { display: flex; gap: 11px; padding: 4px 7px 0 0; height: 26px; color: #222; }
.list-actions svg { width: 20px; height: 20px; }
.list-actions button:last-child svg { height: 16px; }
.crumbs { display: flex; gap: 4px; padding-left: 2px; height: 25px; }
.crumbs button { height: 23px; padding: 0 7px; border: 1px solid #d0d0d0; border-radius: 3px; background: none; font-size: 13px; color: #555; }
.table-wrap { overflow: hidden; flex: 1; border-left: 1px solid #ccc; }
table { width: 1416px; table-layout: fixed; border-collapse: collapse; font-size: 13px; }
.c-check { width: 41px; }
.c-typ { width: 159px; }
.c-std { width: 132px; }
.c-geb { width: 260px; }
.c-raum { width: 164px; }
th, td { border: 1px solid #c8c8c8; padding: 0 4px; height: 24px; font-weight: normal; text-align: left; }
th:first-child, td:first-child { border-left: 0; padding: 0 0 0 10px; }
th { height: 26px; text-align: center; color: #999; }
th:first-child { text-align: left; }
td { color: #2a2a2a; }
.cell { display: flex; align-items: center; gap: 6px; overflow: hidden; }
.cell svg { width: 16px; height: 16px; }
.cell span { overflow: hidden; text-overflow: ellipsis; white-space: nowrap; line-height: 20px; }
table input { appearance: none; display: block; width: 18px; height: 18px; border-radius: 2px; background: #e8e8e8; }
.h-track { padding-left: 2px; flex: none; }
.h-thumb { display: block; width: 937px; height: 7px; border-radius: 4px; background: #999; }
.pager { height: 30px; flex: none; display: flex; align-items: center; justify-content: flex-end; padding: 1px 17px 0 0; color: #333; }
.pager select { width: 60px; margin-left: 4px; border: 0; padding: 0 4px; color: #999; outline: 0; background-color: transparent; }

footer { height: 42px; flex: none; border-top: 1px solid #ccc; padding: 3px 5px; display: flex; flex-direction: column; align-items: flex-start; }
.powered { font-size: 8px; line-height: 9px; font-weight: bold; color: #999; font-family: "DejaVu Sans", sans-serif; }
.foot-brand { display: flex; align-items: center; gap: 5px; font-family: "DejaVu Sans", sans-serif; font-weight: bold; font-size: 17px; line-height: 17px; color: #777; }
.foot-brand svg { width: 14px; height: 14px; }
.foot-tag { width: 105px; background: #bbb; color: #fff; font-size: 9px; line-height: 10px; font-weight: bold; text-align: center; letter-spacing: 1px; }

/* dialog */
.backdrop { position: absolute; inset: 0; background: rgba(0, 0, 0, .54); display: flex; align-items: center; justify-content: center; }
.dialog { width: 426px; height: 144px; background: #fff; border-radius: 4px; padding: 9px; box-shadow: 0 8px 16px 2px rgba(0, 0, 0, .45), 0 10px 40px 6px rgba(0, 0, 0, .25); display: flex; flex-direction: column; }
.dialog-head { display: flex; gap: 6px; padding-left: 2px; height: 33px; }
.dialog-icon { width: 29px; height: 33px; }
.dialog-title { display: block; line-height: 18px; color: #999; }
.dialog-sub { display: block; font-size: 11px; line-height: 14px; color: #c8c8c8; }
.path-row { margin: 13px 11px 18px; height: 30px; display: flex; align-items: center; padding: 1px 7px 0 6px; border-radius: 4px; border-bottom: 1px solid #888; box-shadow: 0 0 3px rgba(0, 0, 0, .16); color: #777; }
.path-icon { width: 20px; height: 24px; margin-right: 8px; }
.path-row input { flex: 1; min-width: 0; border: 0; padding: 1px 0 0; background: none; outline: 0; }
.clear { width: 14px; height: 14px; color: #555; }
.dialog-actions { display: flex; justify-content: space-between; }
.search { position: relative; width: 190px; height: 30px; border: 1px solid #e8802e; border-bottom: 0; border-radius: 3px 3px 0 0; display: flex; align-items: center; padding: 0 5px 0 4px; color: #e8802e; }
.caret { width: 1px; height: 16px; background: #555; }
.search input { flex: 1; min-width: 0; border: 0; padding: 0; background: none; outline: 0; }
.search input::placeholder { color: #e8802e; opacity: 1; }
.search > svg { width: 20px; height: 20px; }
.action { height: 30px; padding: 2px 6px 0 10px; border: 0; border-bottom: 1px solid #888; border-radius: 4px; background: #fff; box-shadow: 0 0 3px rgba(0, 0, 0, .16); display: flex; align-items: center; color: #333; }
.action + .action { padding-left: 8px; }
.a-x { width: 14px; height: 14px; margin-right: 5px; }
.a-check { width: 18px; height: 13px; margin-right: 3px; }
.menu { position: absolute; left: 0; top: 29px; width: 384px; height: 256px; background: #fff; color: #333; overflow: hidden; display: flex; border-radius: 0 0 4px 4px; box-shadow: 0 4px 8px rgba(0, 0, 0, .45); }
.menu ul { flex: 1; list-style: none; margin: 0; padding: 2px 0 0; }
.menu li { height: 34px; display: flex; align-items: center; padding-left: 17px; gap: 20px; }
.menu li svg { width: 23px; height: 24px; }
.menu .hover { background: #f4f4f4; }
.at { font: bold 11px "Liberation Sans", sans-serif; fill: #fff; }
.menu-scroll { width: 17px; background: #f1f1f1; display: flex; flex-direction: column; align-items: center; padding: 7px 0; }
.arrow { border: 4px solid transparent; }
.up { border-top: 0; border-bottom-color: #505050; }
.down { border-bottom: 0; border-top-color: #505050; margin-top: auto; }
.thumb { width: 13px; height: 17px; background: #c1c1c1; margin-top: 23px; }
```
FILE: rows.js
```js
// code, salutation, name, first name, room, has workplace, cost centre
const people = [
  ["EMPDE100687", "Frau", "Aachen", "Andrea", "17.B04A", true],
  ["EMPDE139918", "Frau", "Aachen", "Angelika", "17.B04A", true],
  ["EMPDE123976", "Frau", "Aachen", "Anke", "17.B17", true],
  ["EMPDE120507", "Herr", "Aachen", "Dennis", "1.2402"],
  ["EMPUS100001", "", "Andrews", "Christopher", "SPA000002737"],
  ["EMPDE113293", "Frau", "Baader", "Anne", "17.B04A", true],
  ["EMPUS121794", "Herr", "Barden", "Donald", "17.B05", true],
  ["EMPUS133723", "Frau", "Carlos", "Deanna", "17.B12", true, "104"],
  ["EMPDE127254", "", "Diederich", "Antje", "17.B05", true],
  ["EMPUS130382", "Frau", "Fisher", "Vanessa", "17.B16", true],
  ["EMPUS104001", "Frau", "Franco", "Lillian", "17.B15", true],
  ["EMPDE100013", "", "Freytag", "Karolin", "test1"],
  ["", "", "", "Frank", "17.B16", true],
  ["", "", "", "Daniel", "17.TEST3", true],
  ["", "", "", "Laura", "17.B13", true],
  ["", "", "", "Dominik", "17.B19"],
  ["", "", "", "Alexander", "17.B13", true, "101"],
  ["", "", "", "Rose", "17.B16", true],
  ["", "", "", "Betty", "17.TEST3", true],
  ["", "", "", "Kimberly", "17.B17", true],
  ["", "", "", "Angelika", "1.2377"],
  ["", "", "", "Max", "1.2377"],
  ["", "", "", "Miroslav", "test1"],
  ["", "", "", "Yvonne", "17.B04A", true],
  ["", "", "", "Markus", "17.B11-A", true, "200"],
  ["", "", "", "Bill", "17.B04A", true],
  ["", "", "", "Daniel", "17.B14", true],
  ["", "", "", "Vanessa", "17.B06", true]
];

function cell(text, icon) {
  if (!text) return "<td></td>";
  const svg = icon ? `<svg><use href="#i-${icon}"/></svg>` : "";
  return `<td><div class="cell">${svg}<span>${text}</span></div></td>`;
}

document.getElementById("rows").innerHTML = people.map(([code, title, name, first, room, desk, cost]) =>
  "<tr><td><input type=\"checkbox\" aria-label=\"Auswählen\"></td>" +
  cell("Mitarbeiter", "emp") + cell(code) + cell(title, title.toLowerCase()) + cell(name) + cell(first) +
  cell("BLN01-017 | Gebäude 017", "building") + cell(room, "room") +
  cell(desk && room + " | BLN01-017", "pc") + cell(cost, "cost") + "</tr>"
).join("");
```
